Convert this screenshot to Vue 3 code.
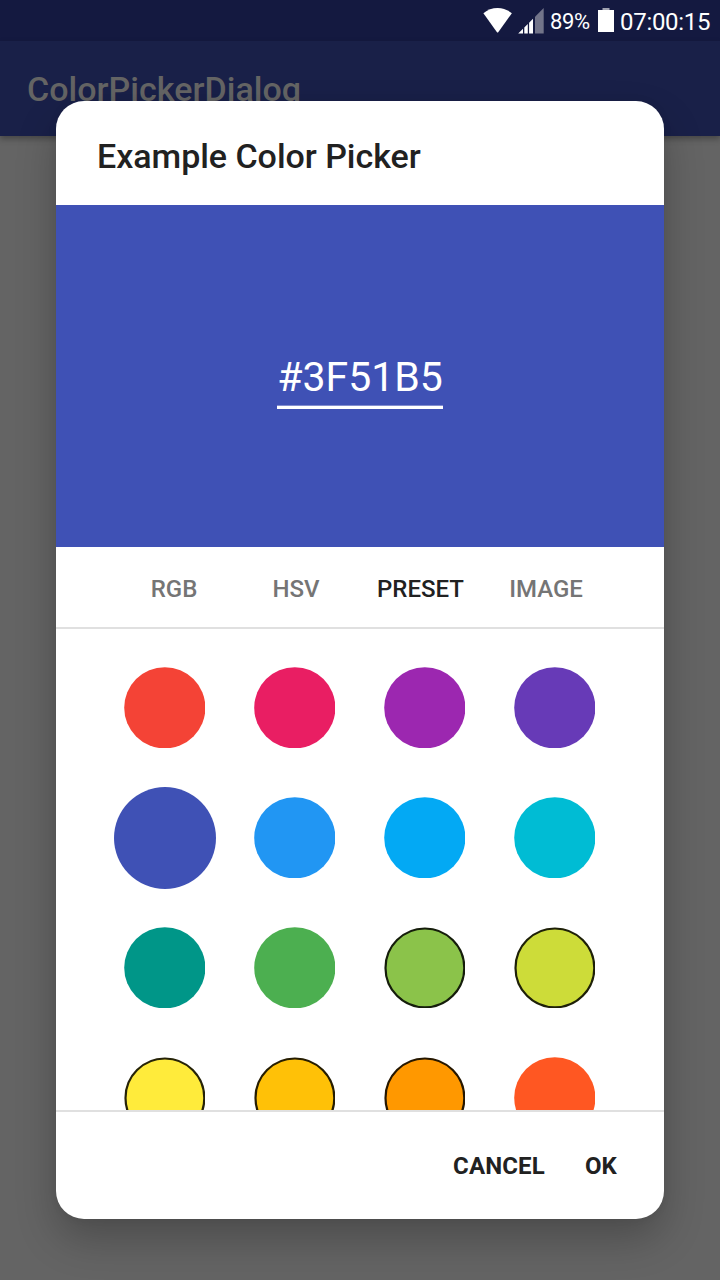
<script setup>
const tabs = [
  { label: 'RGB', width: 122 },
  { label: 'HSV', width: 122 },
  { label: 'PRESET', width: 127, active: true },
  { label: 'IMAGE', width: 124 }
]
const presets = [
  { color: '#f44336' },
  { color: '#e91e63' },
  { color: '#9c27b0' },
  { color: '#673ab7' },
  { color: '#3f51b5', selected: true },
  { color: '#2196f3' },
  { color: '#03a9f4' },
  { color: '#00bcd4' },
  { color: '#009688' },
  { color: '#4caf50' },
  { color: '#8bc34a', ring: '#151d0b' },
  { color: '#cddc39', ring: '#1e2008' },
  { color: '#ffeb3b', ring: '#262308' },
  { color: '#ffc107', ring: '#261d01' },
  { color: '#ff9800', ring: '#261700' },
  { color: '#ff5722' }
]
</script>

<template>
  <div class="screen">
    <header class="status">
      <svg class="wifi" width="30" height="26" viewBox="0 0 30 26">
        <path d="M.4 5.2C4.5 1.9 9.300 0 14.600 0S24.700 1.900 28.900 5.200L15.400 23.900Q14.600 25 13.800 23.900Z" fill="#fff" />
      </svg>
      <svg class="signal" width="26" height="26" viewBox="0 0 26 26">
        <path d="M.2 25.600L5 20.800V25.600ZM6.300 25.600V19.500L9.800 16V25.600ZM11.100 25.600V14.700L15 10.800V25.600Z" fill="#fff" />
        <path d="M17 25.600V8.800L25.700 0V25.600Z" fill="#727489" />
      </svg>
      <span class="percent">89%</span>
      <svg class="battery" width="16" height="24" viewBox="0 0 16 24">
        <path d="M4.500 0H11.500V2H4.500Z" fill="#a1a3b0" />
        <path d="M0 2H16V24H0Z" fill="#fff" />
      </svg>
      <span class="clock">07:00:15</span>
    </header>
    <div class="appbar"><span class="appname">ColorPickerDialog</span></div>

    <section class="dialog">
      <div class="title"><span class="title-text">Example Color Picker</span></div>
      <div class="preview"><span class="hex">#3F51B5</span></div>
      <nav class="tabs">
        <span v-for="t in tabs" :key="t.label" class="tab" :class="{ active: t.active }" :style="{ width: t.width + 'px' }">{{ t.label }}</span>
      </nav>
      <div class="presets">
        <div v-for="p in presets" :key="p.color" class="cell">
          <svg v-if="p.selected" class="dot-large" width="102" height="102" viewBox="0 0 102 102">
            <circle cx="51" cy="51" r="51" :fill="p.color" />
          </svg>
          <svg v-else class="dot" width="81" height="81" viewBox="0 0 81 81">
            <circle v-if="p.ring" cx="40.900" cy="40.900" r="39.400" :fill="p.color" :stroke="p.ring" stroke-width="2.200" />
            <circle v-else cx="40.800" cy="40.800" r="40.600" :fill="p.color" />
          </svg>
        </div>
      </div>
      <footer class="actions">
        <span class="action cancel">CANCEL</span>
        <span class="action ok">OK</span>
      </footer>
    </section>
  </div>
</template>

<style>
body {
  margin: 0;
  background: #646464;
}
</style>

<style scoped>
.screen {
  position: relative;
  width: 720px;
  height: 1280px;
  overflow: hidden;
  background: #646464;
  font-family: Roboto, "Liberation Sans", sans-serif;
}
.status {
  display: flex;
  box-sizing: border-box;
  height: 41px;
  padding-left: 483px;
  background: #141940;
  color: #fff;
  white-space: nowrap;
}
.wifi {
  flex: none;
  margin-top: 8px;
}
.signal {
  flex: none;
  margin: 8px 0 0 5px;
}
.percent {
  width: 48px;
  margin-left: 6px;
  font-size: 22px;
  letter-spacing: -0.4px;
  line-height: 43px;
}
.battery {
  flex: none;
  margin-top: 8px;
}
.clock {
  margin-left: 6px;
  font-size: 24px;
  letter-spacing: -0.3px;
  line-height: 45px;
}
.appbar {
  height: 95px;
  padding-left: 27px;
  background: #192048;
  box-shadow: 0 3px 6px rgba(0, 0, 0, 0.3);
  color: #646464;
  font-size: 34px;
  font-weight: 500;
  letter-spacing: 0.03px;
  line-height: 97px;
}
.dialog {
  position: absolute;
  left: 56px;
  top: 101px;
  display: grid;
  grid-template-rows: 104px 342px 82px 481px 109px;
  width: 608px;
  height: 1118px;
  overflow: hidden;
  border-radius: 28px;
  background: #fff;
  box-shadow: 0 20px 40px rgba(0, 0, 0, 0.24), 0 0 10px rgba(0, 0, 0, 0.06);
  color: #212121;
}
.title {
  padding-left: 41px;
  font-size: 34px;
  font-weight: 500;
  letter-spacing: -0.03px;
  line-height: 110px;
}
.preview {
  display: flex;
  justify-content: center;
  background: #3f51b5;
}
.hex {
  box-sizing: border-box;
  width: 166px;
  height: 61px;
  margin-top: 143px;
  border-bottom: 3px solid #fff;
  box-shadow: inset 0 -1px 0 rgba(255, 255, 255, 0.35);
  color: #fff;
  font-size: 41px;
  line-height: 58px;
  text-align: center;
}
.tabs {
  display: flex;
  box-sizing: border-box;
  height: 82px;
  padding-left: 57px;
  border-bottom: 2px solid #e0e0e0;
  font-size: 24px;
  font-weight: 500;
  line-height: 85px;
}
.tab {
  color: #757575;
  text-align: center;
}
.tab.active {
  color: #212121;
}
.presets {
  display: grid;
  box-sizing: border-box;
  grid-template-columns: repeat(4, 130px);
  grid-auto-rows: 130px;
  height: 481px;
  padding: 14px 0 0 44px;
  overflow: hidden;
}
.cell {
  display: flex;
  align-items: flex-start;
}
.dot {
  flex: none;
  margin: 24px 0 0 24px;
}
.dot-large {
  flex: none;
  margin: 14px 0 0 14px;
}
.actions {
  display: flex;
  box-sizing: border-box;
  justify-content: flex-end;
  gap: 40px;
  height: 109px;
  padding-right: 47px;
  border-top: 2px solid #e0e0e0;
  font-size: 24px;
  font-weight: 700;
  letter-spacing: 0.15px;
  line-height: 109px;
}
</style>
